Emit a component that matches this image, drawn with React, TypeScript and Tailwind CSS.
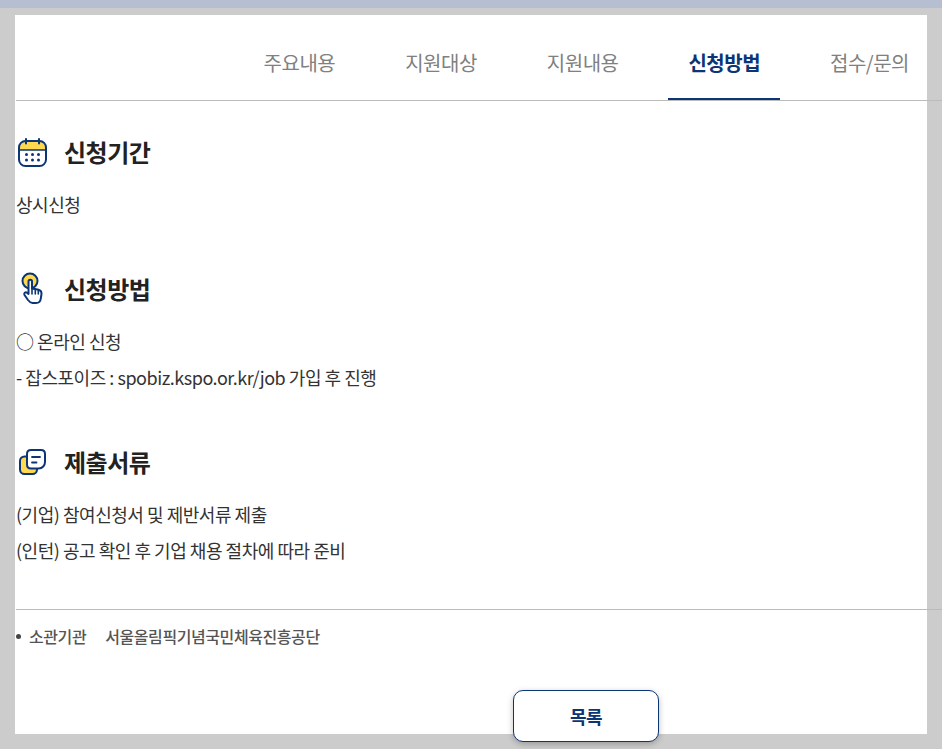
const font = { fontFamily: '"Noto Sans CJK KR", "Noto Sans", sans-serif' };

function CalendarIcon() {
  return (
    <svg width="30" height="30" viewBox="0 0 30 30" fill="none">
      <path d="M2 13V9C2 6.5 4 5 6 5H23C25 5 27 6.5 27 9V13Z" fill="#ffd84d" />
      <rect x="1" y="4" width="27" height="25" rx="6.5" stroke="#0b3575" strokeWidth="2" />
      <path d="M1 13H28" stroke="#0b3575" strokeWidth="1.5" />
      <path d="M8 2V6.5M21 2V6.5" stroke="#0b3575" strokeWidth="2" strokeLinecap="round" />
      <g fill="#0b3575">
        <circle cx="8.5" cy="17.5" r="1.5" /><circle cx="14.5" cy="17.5" r="1.5" /><circle cx="20.5" cy="17.5" r="1.5" />
        <circle cx="8.5" cy="23" r="1.5" /><circle cx="14.5" cy="23" r="1.5" /><circle cx="20.5" cy="23" r="1.5" />
      </g>
    </svg>
  );
}

function HandIcon() {
  return (
    <svg width="30" height="34" viewBox="0 0 30 34" fill="none">
      <g transform="translate(-1 0)">
        <circle cx="13" cy="9" r="7.5" fill="#ffd84d" stroke="#0b3575" strokeWidth="2" />
        <path d="M11.5 22V9.5C11.5 7 15 7 15 9.5V16.5L20.5 17.5C23.5 18 24.7 19.5 24.5 22L23.8 26.5C23.5 29.5 21.5 31 19 31H15.5C13.5 31 12.5 30 11 28L7.5 23C6.5 21 8.5 19.5 10 20.8Z" fill="#fff" stroke="#0b3575" strokeWidth="2" strokeLinejoin="round" />
        <path d="M15 16.5V22M18.3 17V22M21.3 17.5V22" stroke="#0b3575" strokeWidth="1.6" strokeLinecap="round" />
      </g>
    </svg>
  );
}

function DocsIcon() {
  return (
    <svg width="30" height="30" viewBox="0 0 30 30" fill="none">
      <rect x="2" y="9.5" width="17" height="17.5" rx="4.5" fill="#ffd84d" stroke="#0b3575" strokeWidth="2" />
      <path d="M13 3H23C25.5 3 27 4.5 27 7V15C27 18.5 24.5 21.5 20.5 21.5H13C10.5 21.5 9 20 9 17.5V7C9 4.5 10.5 3 13 3Z" fill="#fff" stroke="#0b3575" strokeWidth="2" />
      <path d="M14 10H22M14 15.5H18.5" stroke="#0b3575" strokeWidth="1.8" strokeLinecap="round" />
    </svg>
  );
}

const tabs = ["주요내용", "지원대상", "지원내용", "신청방법", "접수/문의"];

function Heading({ icon, children }: { icon: React.ReactNode; children: React.ReactNode }) {
  return (
    <div className="flex items-center h-[30px]">
      <span className="w-[48px] pl-[2px] shrink-0 flex">{icon}</span>
      <h3 className="text-[24px] leading-[30px] font-bold text-[#222] tracking-[-0.5px]">{children}</h3>
    </div>
  );
}

const body = "text-[18px] leading-[36px] text-[#333] tracking-[-0.47px]";

export default function App() {
  return (
    <div style={font} className="w-[942px] h-[749px] overflow-hidden bg-[#cccccc]">
      <div className="h-[8px] bg-[#b5bfd1]" />
      <div className="mt-[7px] ml-[15px] w-[912px] h-[719px] bg-white">
        <nav className="flex justify-end h-[86px] w-[926px] ml-[1px] pr-[13px] border-b border-[#bbbbbb]">
          {tabs.map((t, i) => (
            <a
              key={t}
              className={
                i === 3
                  ? "h-[85px] ml-[30px] px-[20px] pt-[32px] text-[20px] leading-[32px] font-bold text-[#0b3575] tracking-[-0.5px] border-b-2 border-[#0b3575] box-border"
                  : "h-[85px] ml-[30px] px-[20px] pt-[32px] text-[20px] leading-[32px] text-[#808080] tracking-[-0.5px]"
              }
            >
              {t}
            </a>
          ))}
        </nav>
        <section className="pl-[1px] pt-[36px]">
          <Heading icon={<CalendarIcon />}>신청기간</Heading>
          <p className={"mt-[19px] " + body}>상시신청</p>
        </section>
        <section className="pl-[1px] pt-[52px]">
          <Heading icon={<HandIcon />}>신청방법</Heading>
          <p className={"mt-[19px] " + body}>○ 온라인 신청</p>
          <p className={body}>- 잡스포이즈 : spobiz.kspo.or.kr/job 가입 후 진행</p>
        </section>
        <section className="pl-[1px] pt-[52px]">
          <Heading icon={<DocsIcon />}>제출서류</Heading>
          <p className={"mt-[19px] " + body}>(기업) 참여신청서 및 제반서류 제출</p>
          <p className={body}>(인턴) 공고 확인 후 기업 채용 절차에 따라 준비</p>
        </section>
        <div className="mt-[41px] ml-[1px] w-[926px] border-t border-[#bbbbbb] pt-[8px] flex items-center h-[36px] box-content text-[16px] text-[#555] font-medium tracking-[-0.42px]">
          <span className="w-[5px] h-[5px] rounded-full bg-[#444] shrink-0" />
          <span className="ml-[8px]">소관기관</span>
          <span className="ml-[19px]">서울올림픽기념국민체육진흥공단</span>
        </div>
        <div className="flex mt-[36px] ml-[498px]">
          <button className="w-[146px] h-[52px] rounded-[10px] border border-[#0b3575] bg-white text-[18px] font-bold text-[#0b3575] tracking-[-0.5px] shadow-[0_2px_6px_rgba(0,0,0,0.25)]">
            목록
          </button>
        </div>
      </div>
    </div>
  );
}
